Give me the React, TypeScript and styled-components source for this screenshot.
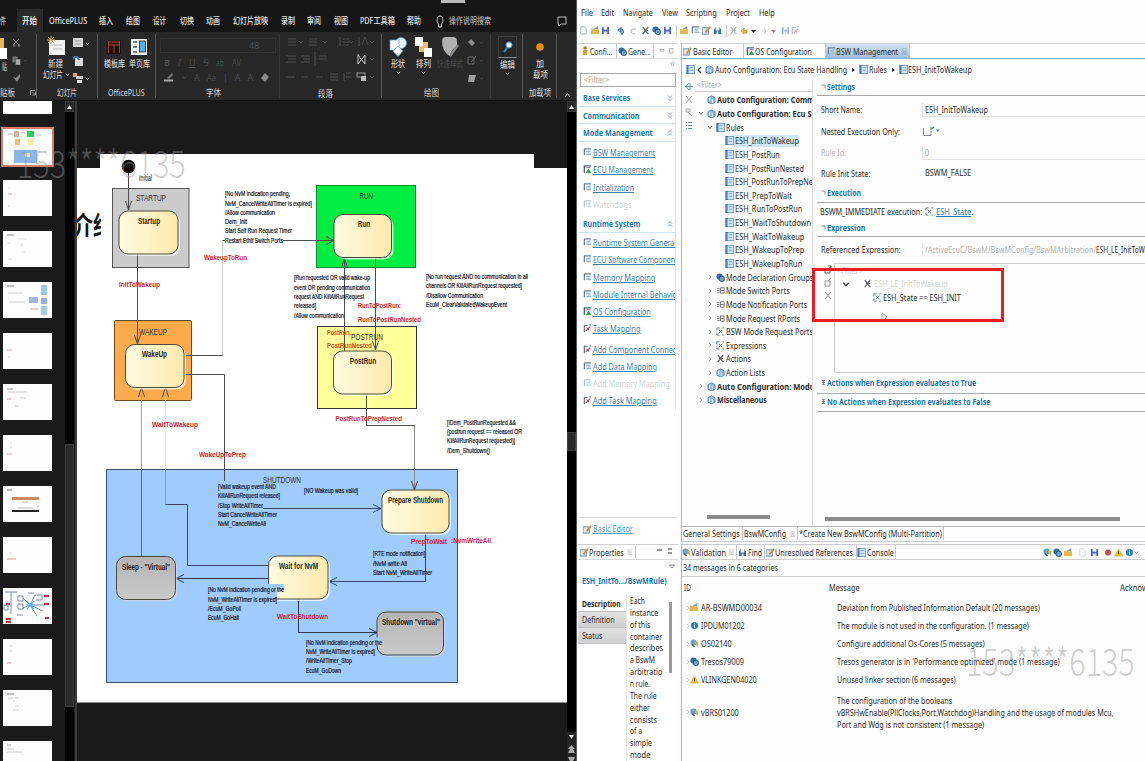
import React, { useLayoutEffect, useRef, useState } from "react";
import styled, { createGlobalStyle, css } from "styled-components";

const Global = createGlobalStyle`
  * { box-sizing: border-box; }
  html, body { margin: 0; padding: 0; overflow: hidden; background: #fff; }
  body { font-family: "Noto Sans", "Noto Sans CJK SC", sans-serif; font-size: 9px; line-height: 1; color: #2b2b2b; }
  svg { flex: none; }
`;

/* ---------- text squeezed to a given width ---------- */
const FitOuter = styled.span<{ $w: number; $c?: string; $b?: boolean; $s?: number; $ml?: number; $u?: boolean }>`
  display: block;
  flex: none;
  width: ${(p) => p.$w}px;
  margin-left: ${(p) => p.$ml ?? 0}px;
  color: ${(p) => p.$c ?? "inherit"};
  font-weight: ${(p) => (p.$b ? 700 : "inherit")};
  font-size: ${(p) => (p.$s ? `${p.$s}px` : "inherit")};
  text-decoration: ${(p) => (p.$u ? "underline" : "none")};
  white-space: pre;
`;
const FitInner = styled.span`
  display: inline-block;
  transform-origin: 0 50%;
  text-decoration: inherit;
`;
type FitProps = { w: number; c?: string; b?: boolean; s?: number; ml?: number; u?: boolean; children: string };
function Fit({ w, c, b, s, ml, u, children }: FitProps) {
  const ref = useRef<HTMLSpanElement>(null);
  const [k, setK] = useState(1);
  useLayoutEffect(() => {
    if (ref.current && ref.current.offsetWidth) setK(w / ref.current.offsetWidth);
  }, [w, children]);
  return (
    <FitOuter $w={w} $c={c} $b={b} $s={s} $ml={ml} $u={u}>
      <FitInner ref={ref} style={{ transform: `scaleX(${k})` }}>{children}</FitInner>
    </FitOuter>
  );
}

/* ---------- shell ---------- */
const Screen = styled.div`
  position: relative;
  display: flex;
  width: 1145px;
  height: 761px;
  overflow: hidden;
  background: #fff;
`;
const Slides = styled.section`
  display: flex;
  flex-direction: column;
  flex: none;
  width: 577px;
  background: #1a1a1a;
  color: #e2e2e2;
  border-right: 1px solid #55575c;
`;
const Ide = styled.section`
  display: flex;
  flex-direction: column;
  flex: 1;
  min-width: 0;
  background: #fdfdfd;
`;
const Watermark = styled.div<{ $x: number; $y: number }>`
  position: absolute;
  left: ${(p) => p.$x}px;
  top: ${(p) => p.$y}px;
  font-family: "Noto Sans CJK SC", sans-serif;
  font-weight: 300;
  font-size: 38px;
  line-height: 38px;
  color: rgba(150, 150, 150, 0.45);
`;
const Highlight = styled.div`
  position: absolute;
  left: 812px;
  top: 268px;
  width: 192px;
  height: 54px;
  border: 3px solid #ed1c24;
`;

/* ---------- presentation app ---------- */
const TitleStrip = styled.div`
  display: flex;
  height: 9px;
  flex: none;
  background: #161616;
  padding-left: 441px;
`;
const SignIn = styled.div`
  width: 24px;
  height: 3px;
  background: #b9b9b9;
`;
const RibbonTabs = styled.div`
  display: flex;
  align-items: center;
  height: 23px;
  flex: none;
  background: #161616;
  font-size: 9px;
  font-weight: 500;
`;
const ActiveTab = styled.div`
  display: flex;
  align-items: center;
  height: 23px;
  width: 26px;
  margin-left: 11px;
  padding-left: 5px;
  background: #292929;
`;
const Ribbon = styled.div`
  display: flex;
  height: 68px;
  flex: none;
  background: #282828;
  padding-top: 2px;
`;
const Group = styled.div<{ $w: number; $line?: string }>`
  display: flex;
  flex-direction: column;
  flex: none;
  width: ${(p) => p.$w}px;
  height: 64px;
  border-right: 1px solid ${(p) => p.$line ?? "#5b5b5b"};
`;
const GroupBody = styled.div`
  display: flex;
  height: 54px;
`;
const GroupLabel = styled.div<{ $pl: number }>`
  display: flex;
  align-items: center;
  height: 12px;
  padding-left: ${(p) => p.$pl}px;
  color: #d8d8d8;
`;
const Tool = styled.div<{ $w: number; $ml?: number }>`
  display: flex;
  flex-direction: column;
  align-items: center;
  gap: 2px;
  width: ${(p) => p.$w}px;
  margin-left: ${(p) => p.$ml ?? 0}px;
  padding-top: 2px;
  flex: none;
  svg { display: block; }
`;
const ToolRow = styled.div`
  display: flex;
  align-items: center;
  gap: 2px;
`;
const ToolGrid = styled.div<{ $ml: number }>`
  display: flex;
  flex-direction: column;
  justify-content: space-between;
  margin-left: ${(p) => p.$ml}px;
  padding: 4px 0 3px;
`;
const FontBox = styled.div`
  display: flex;
  align-items: center;
  width: 116px;
  height: 15px;
  padding-left: 88px;
  border: 1px solid #323232;
  color: #4e4e4e;
`;
const FaintRow = styled.div<{ $gap: number }>`
  display: flex;
  align-items: center;
  gap: ${(p) => p.$gap}px;
  height: 12px;
  padding-left: 4px;
  color: #4c4c4c;
  font-size: 9px;
`;
const EditFrame = styled.div`
  width: 19px;
  height: 22px;
  padding: 4px 3px;
  border: 1px solid #3d3d3d;
  border-bottom-color: #8a8a8a;
`;
const Work = styled.div`
  display: flex;
  flex: 1;
  min-height: 0;
  border-top: 1px solid #141414;
`;
const ThumbList = styled.div`
  display: flex;
  flex-direction: column;
  gap: 15px;
  width: 65px;
  flex: none;
  padding-left: 3px;
`;
const Thumb = styled.div<{ $h?: number; $sel?: boolean }>`
  width: 49px;
  height: ${(p) => p.$h ?? 36}px;
  flex: none;
  background: #fdfdfd;
  ${(p) => p.$sel && css`outline: 2px solid #d08070;`}
  svg { display: block; }
`;
const VScroll = styled.div<{ $w: number }>`
  display: flex;
  flex-direction: column;
  justify-content: flex-start;
  width: ${(p) => p.$w}px;
  flex: none;
  background: #000;
`;
const ScrollBtn = styled.div`
  display: flex;
  align-items: center;
  justify-content: center;
  height: 11px;
  flex: none;
  background: #2a2a2a;
  border: 1px solid #3c3c3c;
`;
const ScrollThumb = styled.div<{ $mt: number; $h: number }>`
  height: ${(p) => p.$h}px;
  margin-top: ${(p) => p.$mt}px;
  flex: none;
  background: #2a2a2a;
  border: 1px solid #3e3e3e;
`;
const Splitter = styled.div`
  width: 2px;
  flex: none;
  background: #3c3c3c;
  margin-left: 1px;
`;
const Canvas = styled.div`
  width: 490px;
  flex: none;
  svg { display: block; }
`;

const Chev = ({ c = "#c8c8c8", up = false, s = 5 }: { c?: string; up?: boolean; s?: number }) => (
  <svg width={s} height={s} viewBox="0 0 6 6"><path d={up ? "M1 4.3L3 2L5 4.3" : "M1 2L3 4.3L5 2"} fill="none" stroke={c} strokeWidth="1.1" /></svg>
);

function RibbonBar() {
  return (
    <Ribbon>
      <Group $w={37}>
        <GroupBody>
          <Tool $w={8}>
            <svg width="8" height="24" viewBox="0 0 8 24"><rect y="2" width="4" height="13" fill="#e9b660" /><rect x="0" y="12" width="7" height="11" fill="#fff" /></svg>
            <Fit w={5} c="#ccc">贴</Fit>
          </Tool>
          <ToolGrid $ml={4}>
            <svg width="9" height="9" viewBox="0 0 9 9"><path d="M1 1L7 7M7 1L1 7" stroke="#777" /><circle cx="2" cy="7.5" r="1.2" fill="#777" /><circle cx="7" cy="7.5" r="1.2" fill="#777" /></svg>
            <ToolRow>
              <svg width="9" height="9" viewBox="0 0 9 9"><rect x="0.5" y="0.5" width="5" height="6" fill="#777" /><rect x="3.5" y="3" width="5" height="6" fill="#aaa" stroke="#333" strokeWidth=".5" /></svg>
              <Chev c="#555" />
            </ToolRow>
            <svg width="9" height="9" viewBox="0 0 9 9"><path d="M1 3L4 4L8 0L8 3L5 8Z" fill="#8a8a8a" /></svg>
          </ToolGrid>
        </GroupBody>
        <GroupLabel $pl={0}>
          <Fit w={15}>贴板</Fit>
          <svg width="21" height="7" viewBox="0 0 21 7"><path d="M15.500 6V1.500H20M17.500 3L20 5.500M20.500 3V6H17.500" fill="none" stroke="#aaa" strokeWidth=".9" /></svg>
        </GroupLabel>
      </Group>
      <Group $w={61}>
        <GroupBody>
          <Tool $w={30} $ml={4}>
            <svg width="19" height="21" viewBox="0 0 19 21"><rect x="2" y="4" width="16" height="15" fill="#f1f1f1" /><path d="M4 9H15M6 13H15" stroke="#b5b5b5" /><path d="M4 0V8M0 4H8M1 1L7 7M7 1L1 7" stroke="#d9a441" strokeWidth="1" /></svg>
            <Fit w={15} ml={-1}>新建</Fit>
            <ToolRow><Fit w={20}>幻灯片</Fit><Chev /></ToolRow>
          </Tool>
          <ToolGrid $ml={2}>
            <ToolRow><svg width="10" height="10" viewBox="0 0 10 10"><rect width="10" height="9" fill="#ddd" /><path d="M2 3H8M2 6H8" stroke="#999" /></svg><Chev /></ToolRow>
            <svg width="10" height="10" viewBox="0 0 10 10"><rect x="2" y="2" width="8" height="8" fill="#ddd" /><path d="M0 3Q4 -2 6 4" fill="none" stroke="#2f7cc4" strokeWidth="2" /></svg>
            <ToolRow><svg width="10" height="10" viewBox="0 0 10 10"><rect width="4" height="4" fill="#e8a070" /><rect x="3" y="3" width="7" height="3" fill="#ccc" /><rect x="4" y="7" width="5" height="3" fill="#eee" /></svg><Chev /></ToolRow>
          </ToolGrid>
        </GroupBody>
        <GroupLabel $pl={20}><Fit w={20}>幻灯片</Fit></GroupLabel>
      </Group>
      <Group $w={58}>
        <GroupBody>
          <Tool $w={24} $ml={4}>
            <svg width="14" height="21" viewBox="0 0 14 21"><rect x="0" y="4" width="14" height="14" fill="#1c1210" /><path d="M1.500 5V17M12.500 5V17M1.500 6H12.500M1.500 9H12.500M7 9V17" stroke="#a8482a" fill="none" /></svg>
            <Fit w={21}>模板库</Fit>
          </Tool>
          <Tool $w={26}>
            <svg width="16" height="21" viewBox="0 0 16 21"><rect x="0" y="3" width="16" height="16" fill="#f4f4f4" /><rect x="8.500" y="5" width="6" height="11" fill="#55aee8" stroke="#222" strokeWidth=".8" /><path d="M2 6H6M2 11H6M2 16H6" stroke="#555" strokeWidth="1.500" /></svg>
            <Fit w={21}>单页库</Fit>
          </Tool>
        </GroupBody>
        <GroupLabel $pl={10}><Fit w={37}>OfficePLUS</Fit></GroupLabel>
      </Group>
      <Group $w={124} $line="#373737">
        <GroupBody>
          <ToolGrid $ml={4}>
            <FontBox>48</FontBox>
            <FaintRow $gap={8}><b>B</b><i>I</i><u>U</u><s>S</s><Fit w={8}>ab</Fit><Fit w={9}>AV</Fit></FaintRow>
            <FaintRow $gap={7}>
              <svg width="11" height="9" viewBox="0 0 11 9"><path d="M3 5L8 0L9 2L5 6Z" fill="#777" /><path d="M0 7.500H9" stroke="#aaa" strokeWidth="2" /></svg>
              <Chev c="#555" /><span>A</span><Fit w={9}>Aa</Fit><span>|</span><span>A</span><span>A</span>
              <svg width="9" height="9" viewBox="0 0 9 9"><path d="M1 5L5 0L9 4L5 9Z" fill="#8a8a8a" /></svg>
            </FaintRow>
          </ToolGrid>
        </GroupBody>
        <GroupLabel $pl={50}><Fit w={15}>字体</Fit></GroupLabel>
      </Group>
      <Group $w={102}>
        <GroupBody>
          <svg width="98" height="54" viewBox="280 34 98 54" fill="none" stroke="#505050">
            <path d="M288 39H296M288 42H296M288 45H296M309 39H317M309 42H317M309 45H317M340 37L340 46M343 39H349M343 42H349M343 45H349M359 37V46M362 45L365 37L368 45" />
            <path d="M299 41L301 43L303 41M323 41L325 43L327 41M349 41L351 43L353 41M370 41L372 43L374 41" />
            <path d="M286 56H296M288 59H296M286 62H296M301 56H310M303 59H310M301 62H310M315 52V66M319 56H327M319 59H327" />
            <path d="M286 77H295M301 77H308M316 77H323M330 74H338M330 77H338M330 80H338M344 73V81M346 73H351M346 77H351" />
            <path d="M358 54V64L365 55V64L358 55" stroke="#c8c8c8" />
            <rect x="357" y="73" width="8" height="4" stroke="#999" /><rect x="361" y="76" width="5" height="5" fill="#bbb" stroke="none" />
            <path d="M370 58L372 60L374 58M370 76L372 78L374 76" />
          </svg>
        </GroupBody>
        <GroupLabel $pl={38}><Fit w={15}>段落</Fit></GroupLabel>
      </Group>
      <Group $w={109} $line="#3c3c3c">
        <GroupBody>
          <Tool $w={24} $ml={4}>
            <svg width="18" height="21" viewBox="0 0 18 21"><circle cx="12" cy="7" r="5.500" fill="#eaf4fb" stroke="#5aa0cc" strokeWidth=".7" /><rect x="1" y="4" width="9" height="10" fill="#fff" stroke="#5aa0cc" strokeWidth=".7" /><path d="M9 10L14 15L9 20.500L4 15Z" fill="#fff" stroke="#5aa0cc" strokeWidth=".7" /></svg>
            <Fit w={14}>形状</Fit><Chev />
          </Tool>
          <Tool $w={26}>
            <svg width="17" height="21" viewBox="0 0 17 21"><rect x="4" y="6" width="9" height="10" fill="#e8bd73" /><rect x="0" y="1" width="8" height="9" fill="#fff" /><rect x="9" y="12" width="8" height="9" fill="#fff" /></svg>
            <Fit w={15}>排列</Fit><Chev />
          </Tool>
          <Tool $w={28}>
            <svg width="18" height="21" viewBox="0 0 18 21"><path d="M1 5Q1 1 5 1H12Q16 1 16 5V11Q10 13 9 20Q1 16 1 5Z" fill="#b0b0b0" /><path d="M9 20L17 9" stroke="#8a8a8a" strokeWidth="2.500" /></svg>
            <Fit w={26} c="#4a4a4a">快速样式</Fit>
          </Tool>
          <ToolGrid $ml={3}>
            <ToolRow><svg width="10" height="9" viewBox="0 0 10 9"><path d="M4 1L8 5L5 8L1 4Z" fill="#8d8d8d" /></svg><Chev c="#555" /></ToolRow>
            <ToolRow><svg width="10" height="9" viewBox="0 0 10 9"><path d="M1 1H7V8H1ZM4 6L9 0" fill="none" stroke="#666" /></svg><Chev c="#555" /></ToolRow>
            <ToolRow><svg width="10" height="9" viewBox="0 0 10 9"><path d="M2 1H9L7 8H1Z" fill="#9d9d9d" /></svg><Chev c="#555" /></ToolRow>
          </ToolGrid>
        </GroupBody>
        <GroupLabel $pl={42}><Fit w={15}>绘图</Fit></GroupLabel>
      </Group>
      <Group $w={32}>
        <Tool $w={30} $ml={1}>
          <EditFrame><svg width="11" height="12" viewBox="0 0 11 12"><path d="M5 7L2 11" stroke="#3c8cc4" strokeWidth="2" /><circle cx="7" cy="4" r="3" fill="#eaf6ff" stroke="#4aa0dc" /></svg></EditFrame>
          <Fit w={15}>编辑</Fit><Chev />
        </Tool>
      </Group>
      <Group $w={34}>
        <GroupBody>
          <Tool $w={32} $ml={1}>
            <svg width="12" height="21" viewBox="0 0 12 21"><circle cx="6" cy="11" r="3.800" fill="#f08c0c" /></svg>
            <Fit w={8}>加</Fit><Fit w={15}>载项</Fit>
          </Tool>
        </GroupBody>
        <GroupLabel $pl={6}><Fit w={22}>加载项</Fit></GroupLabel>
      </Group>
      <Tool $w={19}><svg width="8" height="62" viewBox="0 0 8 62"><path d="M2 61L4.500 57.500L7 61" fill="none" stroke="#ccc" /></svg></Tool>
    </Ribbon>
  );
}

type TL = [number, number, number, string];
const guards: TL[] = [
  [225, 194, 65, "[No NvM indication pending,"], [225, 203.5, 87, "NvM_CancelWriteAllTimer is expired]"], [225, 212.5, 50, "/Allow communication"],
  [225, 221.5, 22, "Dem_Init"], [225, 230.5, 67, "Start Self Run Request Timer"], [225, 240.5, 58, "Restart EthIf Switch Ports"],
  [294, 278, 76, "[Run requested OR valid wake-up"], [294, 288, 76, "event OR pending communication"], [294, 297, 70, "request AND KillAllRunRequest"],
  [294, 306, 22, "released]"], [294, 316, 50, "/Allow communication"],
  [426, 276.5, 102, "[No run request AND no communication in all"], [426, 286, 96, "channels OR KillAllRunRequest requested]"],
  [426, 295.5, 57, "/Disallow Communication"], [426, 304.5, 81, "EcuM_ClearValidatedWakeupEvent"],
  [447, 422.5, 69, "[!Dem_PostRunRequested &&"], [447, 431.5, 75, "(postrun request == released OR"], [447, 440.5, 68, "KillAllRunRequest requested)]"], [447, 450.5, 43, "/Dem_Shutdown()"],
  [218, 486.5, 58, "[Valid wakeup event AND"], [218, 496, 62, "KillAllRunRequest released]"], [218, 505.5, 45, "/Stop WriteAllTimer"],
  [218, 515, 59, "Start CancelWriteAllTimer"], [218, 524, 48, "NvM_CancelWriteAll"], [304, 491, 54, "[NO Wakeup was valid]"],
  [373, 554, 52, "[RTE mode notification]"], [373, 563.5, 34, "/NvM write All"], [373, 572.5, 59, "Start NvM_WriteAllTimer"],
  [208, 590, 76, "[No NvM indication pending or the"], [208, 599.5, 69, "NvM_WriteAllTimer is expired]"], [208, 608.5, 33, "/EcuM_GoPoll"], [208, 617.5, 31, "EcuM_GoHalt"],
  [306, 643, 76, "[No NvM indication pending or the"], [306, 652, 69, "NvM_WriteAllTimer is expired]"], [306, 661, 46, "/WriteAllTimer_Stop"], [306, 671, 35, "EcuM_GoDown"],
];
const events: TL[] = [
  [119, 284.5, 41, "InitToWakeup"], [204, 257.5, 43, "WakeupToRun"], [358, 305, 43, "RunToPostRun:"], [358, 319, 63, "RunToPostRunNested"],
  [327, 332, 24, "PostRun,"], [327, 345.5, 45, "PostRunNested"], [335.5, 418.5, 66.5, "PostRunToPrepNested"], [152, 424.5, 46, "WaitToWakeup"],
  [199, 454.5, 47, "WakeUpToPrep"], [411, 541, 36, "PrepToWait"], [451, 540.5, 40, ":NvmWriteAll"], [277, 616, 51, "WaitToShutdown"],
];
const titles: TL[] = [[136, 201, 30, "STARTUP"], [359.5, 199, 13.5, "RUN"], [351, 340, 32, "POSTRUN"], [139, 334.5, 28, "WAKEUP"], [263, 483, 38, "SHUTDOWN"]];
const nodes: [number, number, number, number, string, TL][] = [
  [119, 211, 59, 43, "y", [138, 224, 22, "Startup"]], [334, 214.5, 57.5, 43, "y", [358, 227, 12, "Run"]], [333.5, 351, 58, 43, "y", [350, 364, 26, "PostRun"]],
  [125.5, 344.5, 58.5, 43, "y", [142, 357, 25, "WakeUp"]], [382, 490, 67, 43, "y", [388, 503, 55, "Prepare Shutdown"]], [268.5, 556, 59.5, 43, "y", [279, 569, 39, "Wait for NvM"]],
  [116.5, 556.5, 59, 43, "g", [122, 570, 48, 'Sleep - "Virtual"']], [377, 612, 66.5, 43, "g", [382, 625, 58, 'Shutdown "virtual"']],
];
const arrow = (x: number, y: number, d: "u" | "d" | "l" | "r") =>
  d === "u" ? `M${x - 3} ${y + 10}L${x} ${y}L${x + 3} ${y + 10}` : d === "d" ? `M${x - 3} ${y - 9}L${x} ${y}L${x + 3} ${y - 9}`
    : d === "l" ? `M${x + 8} ${y - 4}L${x} ${y}L${x + 8} ${y + 4}` : `M${x - 8} ${y - 4}L${x} ${y}L${x - 8} ${y + 4}`;

const T = ({ t }: { t: TL }) => <text x={t[0]} y={t[1]} textLength={t[2]} lengthAdjust="spacingAndGlyphs">{t[3]}</text>;

function StateDiagram() {
  return (
    <svg width="490" height="660" viewBox="77 101 490 660" fontFamily="'Liberation Sans', sans-serif">
      <defs>
        <linearGradient id="y" x1="0" x2="1"><stop offset="0" stopColor="#fffbe0" /><stop offset="1" stopColor="#fde9ac" /></linearGradient>
        <linearGradient id="g" x1="0" x2="0" y1="0" y2="1"><stop offset="0" stopColor="#b4b4b4" /><stop offset="1" stopColor="#cacaca" /></linearGradient>
        <clipPath id="cut"><rect x="77" y="168" width="24" height="100" /></clipPath>
      </defs>
      <path d="M77 168H100V154H534V168H567V702.500H77Z" fill="#fff" />
      <g clipPath="url(#cut)"><text x="73" y="235" fontSize="26" fontWeight="700" fill="#151515" fontFamily="'Noto Sans CJK SC', sans-serif" textLength="40" lengthAdjust="spacingAndGlyphs">介绍</text></g>
      <g stroke="#333" strokeWidth="1">
        <rect x="112.500" y="188.500" width="76.500" height="79" fill="#cbcbcb" stroke="#555" />
        <rect x="316.500" y="185.500" width="99" height="82" fill="#00ee44" stroke="#128a30" />
        <rect x="317.500" y="326.500" width="99" height="82" fill="#ffff99" />
        <rect x="114.500" y="320.500" width="77" height="80" rx="1" fill="#ffab4b" stroke="#6b4a22" />
        <rect x="106.500" y="469.500" width="351" height="213" fill="#a0cbff" stroke="#34507a" />
      </g>
      <g fill="none" stroke="#4b4b4b" strokeWidth="1">
        <path d={`M128.500 170V210${arrow(128.5, 210, "d")}`} />
        <path d={`M137.500 254V344${arrow(137.5, 344, "d")}`} />
        <path d="M222.500 240.500V355.500" stroke="#c9c9c2" />
        <path d={`M184 355.500H222.500M222.500 240.500H225M283 240.500H334${arrow(334, 240.5, "r")}`} />
        <path d={`M344.500 351V257${arrow(344.5, 258, "u")}M375.500 257V350${arrow(375.5, 350, "d")}`} />
        <path d="M366.500 394V425.500H414.500" />
        <path d="M414.500 425.500V490" stroke="#8b8b82" />
        <path d={arrow(414.5, 490, "d")} />
        <path d="M184 374.500H224.500V481" />
        <path d="M141.500 387V469" stroke="#a8a898" />
        <path d="M141.500 469V556" stroke="#4d6d96" />
        <path d={arrow(141.5, 387, "u") + arrow(165.5, 387, "u")} />
        <path d="M165.500 397V469" stroke="#e2e2e2" />
        <path d="M165.500 469V504.500" stroke="#7f9fc6" />
        <path d="M165.500 504.500H187.500V565.500H268" stroke="#36496b" />
        <path d={`M263 508.500H381${arrow(381, 508.500, "r")}`} stroke="#36496b" />
        <path d={`M425.500 533V581.500H328${arrow(329, 581.500, "l")}`} stroke="#36496b" />
        <path d={`M298.500 599V632.500H377${arrow(377, 632.500, "r")}`} stroke="#2b3550" />
        <path d={`M268 578.500H177${arrow(176, 578.500, "l")}`} stroke="#2b3550" />
      </g>
      <circle cx="128.500" cy="166.500" r="6.800" fill="#0a0a0a" />
      {nodes.map(([x, y, w, h, f], i) => (
        <g key={i}>
          <rect x={x + 2} y={y + 2} width={w} height={h} rx="9" fill={f === "g" ? "#cfd6e2" : "#fff"} opacity=".7" />
          <rect x={x} y={y} width={w} height={h} rx="9" fill={`url(#${f})`} stroke="#3a3a30" strokeWidth=".9" />
        </g>
      ))}
      <path d="M268 584H284V591H277V598H268ZM376 637H382V645H376Z" fill="#a0cbff" />
      <g fontSize="9.500" fontWeight="700" fill="#1c1c1c">{nodes.map((n, i) => <T key={i} t={n[5]} />)}</g>
      <g fontSize="9.500" fill="#2e2e2e">{titles.map((t, i) => <T key={i} t={t} />)}</g>
      <text x="139" y="181" fontSize="8.500" fill="#222" textLength="13" lengthAdjust="spacingAndGlyphs">Initial</text>
      <g fontSize="7" fill="#101018" stroke="#101018" strokeWidth=".2">{guards.map((t, i) => <T key={i} t={[t[0], t[1] + 2, t[2], t[3]]} />)}</g>
      <g fontSize="7.500" fontWeight="700" fill="#d2232a">{events.map((t, i) => <g key={i} fill={i === 4 || i === 5 ? "#dc4a14" : undefined}><T t={[t[0], t[1] + 2.5, t[2], t[3]]} /></g>)}</g>
    </svg>
  );
}

const Mini = ({ children }: { children?: React.ReactNode }) => <svg width="49" height="36" viewBox="0 0 49 36">{children}</svg>;
const minis: React.ReactNode[] = [
  <Mini key="a"><rect x="11" y="2" width="5" height="6" fill="#ccb8a8" /><rect x="24" y="2" width="7" height="6" fill="#2ccc5a" /><rect x="12" y="10" width="5" height="6" fill="#f2c070" /><rect x="25" y="10" width="5" height="6" fill="#f4ec9a" /><rect x="11" y="21" width="23" height="13" fill="#8ab6ee" /><rect x="22" y="24" width="5" height="4" fill="#e8e0a0" /><path d="M5 5H10M18 4H22M33 6H38" stroke="#bbb" /></Mini>,
  <Mini key="b"><path d="M5 8H8M5 26H7" stroke="#ddd" /><path d="M5 14H9" stroke="#dba0a8" /></Mini>,
  <Mini key="c"><path d="M4 4H11" stroke="#888" /><path d="M4 12H8M15 8H24M18 14H20M18 21H22M5 28H9" stroke="#ddd" /></Mini>,
  <Mini key="d"><path d="M4 4H11" stroke="#888" /><path d="M5 11H20M6 20H22" stroke="#ccc" /><rect x="26" y="15" width="9" height="6" fill="#9cb6dc" /><rect x="38" y="3" width="6" height="10" fill="#9cc8e6" /><rect x="38" y="16" width="6" height="6" fill="#8fb0e8" /><rect x="38" y="24" width="6" height="9" fill="#a0cfe0" /><path d="M27 27H35" stroke="#d8a0a0" /></Mini>,
  <Mini key="e"><path d="M4 17H9" stroke="#e0a0a6" /><path d="M5 24H7" stroke="#ddd" /></Mini>,
  <Mini key="f"><path d="M4 5H10" stroke="#999" /><path d="M5 8H24M17 14H23M12 22H16" stroke="#ccc" /><path d="M4 15H8" stroke="#e0a0a6" /></Mini>,
  <Mini key="g"><path d="M7 8H9M7 12H9" stroke="#ddd" /><path d="M4 19H9" stroke="#e0a0a6" /></Mini>,
  <Mini key="h"><path d="M4 4H9" stroke="#777" /><rect x="9" y="11" width="27" height="3" fill="#c88a62" /><rect x="9" y="24" width="27" height="2" fill="#222" /><path d="M19 16H25M15 22H30M34 20H36" stroke="#bbb" /></Mini>,
  <Mini key="i"><path d="M6 16H9" stroke="#ddd" /><path d="M4 22H13" stroke="#dc9aa0" /></Mini>,
  <Mini key="j"><g fill="none" stroke="#60708c" strokeWidth=".8"><path d="M2 4H14M8 4V26M15 8H20V13H15ZM15 16H20V21H15ZM14 27H20M20 10L27 17L32 7H39V12H33M20 20L27 17L40 23M27 17L34 28M27 17H42M25 5H31M1 17H5V22H1Z" /></g><path d="M24 13L31 21M31 13L24 21M23 17H32" stroke="#62aee8" strokeWidth="1.200" /><path d="M3 16H7M41 8H46M41 16H46M3 31H8M3 34H8M42 30H46" stroke="#c8303c" strokeWidth="2" /></Mini>,
  <Mini key="k"><path d="M7 7H9M7 12H9" stroke="#ddd" /><path d="M4 24H8" stroke="#dc9aa0" /></Mini>,
  <Mini key="l"><path d="M4 4H11" stroke="#888" /><path d="M5 8H16M10 11H12M12 16H16M10 20H16" stroke="#ccc" /></Mini>,
];

function Presentation() {
  return (
    <Slides>
      <TitleStrip><SignIn /></TitleStrip>
      <RibbonTabs>
        <Fit w={6} c="#ccc">件</Fit>
        <ActiveTab><Fit w={15} b>开始</Fit></ActiveTab>
        <Fit w={38} ml={6}>OfficePLUS</Fit>
        <Fit w={14} ml={12}>插入</Fit><Fit w={14} ml={13}>绘图</Fit><Fit w={13} ml={13}>设计</Fit><Fit w={14} ml={14}>切换</Fit><Fit w={14} ml={12}>动画</Fit>
        <Fit w={35} ml={13}>幻灯片放映</Fit><Fit w={14} ml={13}>录制</Fit><Fit w={14} ml={12}>审阅</Fit><Fit w={14} ml={13}>视图</Fit><Fit w={35} ml={12}>PDF工具箱</Fit><Fit w={14} ml={12}>帮助</Fit>
        <Tool $w={10} $ml={14}><svg width="8" height="14" viewBox="0 0 8 14"><path d="M2.500 9C0 6 1 1 4 1S8 6 5.500 9V12H2.500Z" fill="none" stroke="#ccc" /></svg></Tool>
        <Fit w={42} ml={4} c="#aaa">操作说明搜索</Fit>
        <Tool $w={10} $ml={66}><svg width="10" height="11" viewBox="0 0 10 11"><path d="M1 1H9V8H4L2 10V8H1Z" fill="none" stroke="#bbb" /></svg></Tool>
      </RibbonTabs>
      <RibbonBar />
      <Work>
        <ThumbList>
          <Thumb $h={13}><svg width="49" height="13"><path d="M7 1.500H11" stroke="#ddd" /></svg></Thumb>
          {minis.map((m, i) => <Thumb key={i} $sel={i === 0}>{m}</Thumb>)}
          <Thumb><Mini><path d="M4 4H8" stroke="#aaa" /><path d="M4 8H11M4 11H20" stroke="#ccc" /></Mini></Thumb>
        </ThumbList>
        <VScroll $w={9}>
          <ScrollBtn><svg width="5" height="4"><path d="M0 4L2.500 0L5 4Z" fill="#ddd" /></svg></ScrollBtn>
          <ScrollThumb $mt={332} $h={263} />
        </VScroll>
        <Splitter />
        <Canvas><StateDiagram /></Canvas>
        <VScroll $w={9}>
          <ScrollBtn><svg width="5" height="4"><path d="M0 4L2.500 0L5 4Z" fill="#ddd" /></svg></ScrollBtn>
          <ScrollThumb $mt={320} $h={19} />
          <svg width="9" height="310" viewBox="0 0 9 310"><rect y="281" width="9" height="29" fill="#242424" /><path d="M2 284H7L4.500 288Z" fill="#eee" /><path d="M4.500 294L8 298H6L8 302H1L3 298H1ZM1 306H8L6 310H3Z" fill="#aaa" /></svg>
        </VScroll>
      </Work>
    </Slides>
  );
}

/* ---------- configuration tool ---------- */
type GlyphKind = "doc" | "chart" | "green" | "pack" | "ports" | "warn" | "info" | "find" | "gear" | "folder" | "save" | "page" | "flag" | "tools" | "cond" | "red" | "pen";
const glyphs: Record<GlyphKind, React.ReactNode> = {
  doc: <><rect x=".5" y=".5" width="9" height="9" fill="#d3e6f5" stroke="#6f9cc8" /><path d="M2 0V10" stroke="#3c6da6" strokeWidth="1.500" /><path d="M4 3H8M4 6H8" stroke="#6f9fcc" /></>,
  chart: <><path d="M1 1H9M1.500 1V8M4 4H8M4 7H9" fill="none" stroke="#6b7f98" strokeWidth="1.400" /><rect x="4" y="2" width="5" height="6" fill="#b9d3ea" opacity=".6" /></>,
  green: <><path d="M1.500 9V1H9" fill="none" stroke="#4f6680" strokeWidth="1.500" /><path d="M3 9L6 4L9.500 9Z" fill="#38a048" /><path d="M4 3H8" stroke="#a05060" /></>,
  pack: <><path d="M1 3L5 1L9 3V8L5 10L1 8Z" fill="#8fbbe2" stroke="#3c6b9e" strokeWidth=".8" /><path d="M3 3V7M6 5V9" stroke="#fff" /></>,
  ports: <path d="M1 3H4M1 5H4M1 7H4M5 2H9V8H5ZM5 5H9" fill="none" stroke="#66707c" />,
  warn: <><path d="M5 1L9.500 9H.5Z" fill="#f4c430" stroke="#c89a10" strokeWidth=".6" /><path d="M5 3.500V7" stroke="#503c00" /></>,
  info: <><circle cx="5" cy="5" r="4" fill="#2b7fb8" /><path d="M5 4V8M5 2V3" stroke="#fff" /></>,
  find: <path d="M1 9V4L3 1V5H7V1L9 4V9H6V6H4V9Z" fill="#3b6ba5" />,
  gear: <><circle cx="4" cy="4" r="3.500" fill="#2f6ea6" /><circle cx="6.500" cy="6.500" r="3" fill="#6aa4cf" stroke="#234e7c" /></>,
  folder: <><path d="M0 9V3H4L5 4H9V9Z" fill="#e4b850" /><path d="M3 3L8 0V4" fill="#8a9cb0" /></>,
  save: <><rect x="1" y="1" width="8" height="8" fill="#4a6ab8" /><rect x="3" y="1" width="4" height="3" fill="#fff" /><rect x="3" y="6" width="4" height="3" fill="#dde" /></>,
  page: <path d="M2 1H6L8 3V9H2Z" fill="#fff" stroke="#9aa" />,
  flag: <><circle cx="4" cy="4" r="3.500" fill="#6aa0cc" /><path d="M5 3H9V9L7 7Z" fill="#e0b030" /><path d="M2 6L5 9" stroke="#2c5d88" strokeWidth="1.500" /></>,
  tools: <path d="M2 1L8 9M8 1L2 9M3 5H8" stroke="#5d646c" strokeWidth="1.300" />,
  cond: <path d="M1 1H4M1 9H4M9 1H7M9 9H7M3 3L7 7M7 3L3 7M1 1V4M1 6V9" fill="none" stroke="#5a7288" />,
  red: <><path d="M1.500 9V1.500H5M7 1H9" fill="none" stroke="#66788c" strokeWidth="1.400" /><path d="M3 8L8 3M4 4L7 7" stroke="#b83a4c" strokeWidth="1.300" /></>,
  pen: <><rect x="0" y="2" width="7" height="7" fill="#dbe8f4" stroke="#5d82ac" /><path d="M4 7L9 1" stroke="#d88a30" strokeWidth="2" /></>,
};
const GlyphBox = styled.span<{ $ml: number; $dim: boolean }>`
  display: block;
  flex: none;
  width: 9px;
  height: 9px;
  margin-left: ${(p) => p.$ml}px;
  opacity: ${(p) => (p.$dim ? 0.45 : 1)};
  svg { display: block; }
`;
const Glyph = ({ k, ml = 0, dim = false }: { k: GlyphKind; ml?: number; dim?: boolean }) => (
  <GlyphBox $ml={ml} $dim={dim}><svg width="9" height="9" viewBox="0 0 10 10">{glyphs[k]}</svg></GlyphBox>
);

const Row = styled.div<{ $h: number; $pl?: number; $bt?: string; $bb?: string; $lift?: number }>`
  display: flex;
  align-items: center;
  flex: none;
  height: ${(p) => p.$h}px;
  padding-left: ${(p) => p.$pl ?? 0}px;
  padding-bottom: ${(p) => p.$lift ?? 0}px;
  border-top: ${(p) => (p.$bt ? `1px solid ${p.$bt}` : "0")};
  border-bottom: ${(p) => (p.$bb ? `1px solid ${p.$bb}` : "0")};
`;
const Columns = styled.div<{ $h?: number }>`
  display: flex;
  min-height: 0;
  flex: ${(p) => (p.$h ? "none" : 1)};
  height: ${(p) => (p.$h ? `${p.$h}px` : "auto")};
`;
const SideStack = styled.div`
  display: flex;
  flex-direction: column;
  width: 101px;
  flex: none;
  padding-left: 1px;
  background: #fff;
`;
const Main = styled.div`
  display: flex;
  flex-direction: column;
  width: 464px;
  flex: none;
  margin-left: 3px;
  border-left: 1px solid #aab4c0;
`;
const Tab = styled.div<{ $w: number; $active?: boolean; $pl?: number }>`
  display: flex;
  align-items: center;
  width: ${(p) => p.$w}px;
  height: 100%;
  flex: none;
  padding-left: ${(p) => p.$pl ?? 2}px;
  border-right: 1px solid #c4c8cc;
  background: ${(p) => (p.$active ? "linear-gradient(#d3e2f2, #9fc0e2)" : "transparent")};
`;
const SearchBox = styled.div`
  display: flex;
  align-items: center;
  width: 96px;
  height: 14px;
  flex: none;
  margin: 4px 0 2px 2px;
  padding-left: 3px;
  border: 1px solid #a5a5a5;
`;
const SideClip = styled.div<{ $h: number }>`
  display: flex;
  flex-direction: column;
  flex: none;
  width: 98px;
  height: ${(p) => p.$h}px;
  overflow: hidden;
  border-right: 1px solid #dfe3e6;
`;
const Gap = styled.div<{ $h: number }>`
  height: ${(p) => p.$h}px;
  flex: none;
`;
const IconRail = styled.div`
  display: flex;
  flex-direction: column;
  align-items: center;
  gap: 4px;
  width: 13px;
  padding-top: 2px;
  flex: none;
`;
const TreePane = styled.div`
  display: flex;
  flex-direction: column;
  width: 118px;
  flex: none;
  overflow: hidden;
  border-right: 1px solid #dcdcdc;
`;
const Selected = styled.div<{ $on: boolean }>`
  display: flex;
  flex: none;
  align-items: center;
  height: 12px;
  background: ${(p) => (p.$on ? "#cfe8f8" : "transparent")};
`;
const HBar = styled.div<{ $ml: number; $w: number; $mt: number }>`
  width: ${(p) => p.$w}px;
  height: 4px;
  flex: none;
  margin: ${(p) => p.$mt}px 0 0 ${(p) => p.$ml}px;
  background: #8b8b8b;
`;
const Form = styled.div`
  display: flex;
  flex-direction: column;
  flex: 1;
  min-width: 0;
  overflow: hidden;
  padding-left: 4px;
`;
const LabelCell = styled.div`
  width: 105px;
  flex: none;
  padding-left: 4px;
`;
const Field = styled.div<{ $line?: boolean; $bare?: boolean }>`
  display: flex;
  align-items: center;
  width: 230px;
  flex: none;
  height: 14px;
  padding-left: ${(p) => (p.$bare ? 0 : 2)}px;
  border-left: 1px solid ${(p) => (p.$bare ? "transparent" : "#e4e4e4")};
  border-bottom: 1px solid ${(p) => (p.$line ? "#e2e2e2" : "transparent")};
`;
const TreeBox = styled.div`
  display: flex;
  flex-direction: column;
  flex: 1;
  height: 110px;
  border: 1px solid #cfcfcf;
  border-right: 0;
`;
const ToolCol = styled.div`
  display: flex;
  flex-direction: column;
  align-items: center;
  gap: 4px;
  width: 17px;
  padding: 2px 0 0 4px;
  flex: none;
`;
const PropTabs = styled.div`
  width: 49px;
  flex: none;
  border-right: 1px solid #e3e3e3;
`;
const PropTab = styled.div<{ $on?: boolean }>`
  display: flex;
  align-items: center;
  height: ${(p) => (p.$on ? 17 : 16)}px;
  padding-left: 4px;
  background: ${(p) => (p.$on ? "#fff" : "linear-gradient(#e2e2e2, #cfcfcf)")};
  border-bottom: 1px solid #c2c2c2;
`;
const PropText = styled.div`
  display: flex;
  flex-direction: column;
  width: 38px;
  padding-left: 3px;
  flex: none;
`;
const Thin = styled.div`
  width: 3px;
  height: 71px;
  margin: 7px 0 0 4px;
  background: #9a9a9a;
`;
const MessageText = styled.div`
  display: flex;
  flex-direction: column;
  gap: 3px;
`;

const BLUE = "#1a78b4";
const LINK = "#3a83b0";

type Side = [string, number, GlyphKind, number, boolean?];
const sideTop: Side[] = [["BSW Management", 62, "chart", 17.5], ["ECU Management", 60, "green", 17.5], ["Initialization", 41, "chart", 17], ["Watchdogs", 38, "chart", 17, true]];
const sideMid: Side[] = [["Runtime System General", 83, "chart", 17.5], ["ECU Software Components", 88, "chart", 17.5], ["Memory Mapping", 62, "chart", 17], ["Module Internal Behavior", 87, "chart", 17], ["OS Configuration", 58, "green", 17.5], ["Task Mapping", 48, "red", 17.5]];
const sideEnd: Side[] = [["Add Component Connection", 97, "red", 17.5], ["Add Data Mapping", 64, "chart", 17], ["Add Memory Mapping", 77, "chart", 17, true], ["Add Task Mapping", 64, "red", 17.5]];
const SideRows = ({ rows }: { rows: Side[] }) => (
  <>{rows.map(([t, w, k, h, dim]) => (
    <Row key={t} $h={h} $pl={5} $lift={1}><Glyph k={k} dim={dim} /><Fit w={w} ml={1} c={dim ? "#d0d4d8" : LINK} u={!dim}>{t}</Fit></Row>
  ))}</>
);
const SideHead = ({ t, w, h, up }: { t: string; w: number; h: number; up?: boolean }) => (
  <Row $h={h} $pl={5} $bb="#cfe4f2">
    <Fit w={w} b c={BLUE}>{t}</Fit>
    <Row as="span" $h={8} $pl={84 - w}>
      <svg width="6" height="8" viewBox="0 0 6 8"><path d={up ? "M1 3.500L3 1.500L5 3.500M1 6.500L3 4.500L5 6.500" : "M1 1.500L3 3.500L5 1.500M1 4.500L3 6.500L5 4.500"} fill="none" stroke="#5b8fb5" strokeWidth=".9" /></svg>
    </Row>
  </Row>
);

function LeftTop() {
  return (
    <SideStack>
      <Row $h={16} $pl={2} $bt="#d4d4d4" $bb="#e0e0e0">
        <Tab $w={37} $pl={1}><svg width="8" height="10" viewBox="0 0 8 10"><circle cx="4" cy="2" r="1.800" fill="#c87020" /><rect x="2" y="4" width="4" height="5" fill="#e0a020" /></svg><Fit w={22} ml={1}>Confi...</Fit></Tab>
        <Tab $w={37} $pl={1}><Glyph k="gear" /><Fit w={23} ml={1}>Gene...</Fit></Tab>
        <svg width="20" height="10" viewBox="0 0 20 10"><path d="M6 3.500H10V5H6ZM15.500 2.500H19V7H15.500Z" fill="none" stroke="#aaa" strokeWidth=".8" /></svg>
      </Row>
      <Row $h={10} $pl={92}><svg width="5" height="5"><path d="M.5 1H4.500L2.500 4Z" fill="none" stroke="#aaa" strokeWidth=".8" /></svg></Row>
      <SearchBox><Fit w={25} c="#aaa" s={8}>{"<Filter>"}</Fit></SearchBox>
      <SideClip $h={321}>
        <SideHead t="Base Services" w={47} h={18} />
        <SideHead t="Communication" w={56} h={17} />
        <SideHead t="Mode Management" w={70} h={18} up />
        <Gap $h={2} />
        <SideRows rows={sideTop} />
        <Gap $h={2} />
        <SideHead t="Runtime System" w={57} h={18} up />
        <Gap $h={1} />
        <SideRows rows={sideMid} />
        <Gap $h={3} />
        <SideRows rows={sideEnd} />
      </SideClip>
      <Gap $h={107} />
      <Row $h={23} $pl={5} $bt="#d8dde2"><Glyph k="pen" /><Fit w={40} ml={1} c="#4a97c0" u s={8.5}>Basic Editor</Fit></Row>
    </SideStack>
  );
}

type Node = [number, string, number, GlyphKind, string?, boolean?];
const tree: Node[] = [
  [10, "Auto Configuration: Communication", 132, "pack", "", true], [10, "Auto Configuration: Ecu State Handling", 146, "pack", "v", true], [19, "Rules", 18, "doc", "v"],
  [28, "ESH_InitToWakeup", 64, "doc"], [28, "ESH_PostRun", 45, "doc"], [28, "ESH_PostRunNested", 69, "doc"], [28, "ESH_PostRunToPrepNested", 92, "doc"], [28, "ESH_PrepToWait", 57, "doc"],
  [28, "ESH_RunToPostRun", 67, "doc"], [28, "ESH_WaitToShutdown", 76, "doc"], [28, "ESH_WaitToWakeup", 69, "doc"], [28, "ESH_WakeupToPrep", 69, "doc"], [28, "ESH_WakeupToRun", 67, "doc"],
  [19, "Mode Declaration Groups", 87, "gear", ">"], [19, "Mode Switch Ports", 64, "ports", ">"], [19, "Mode Notification Ports", 81, "ports", ">"], [19, "Mode Request RPorts", 74, "ports", ">"],
  [19, "BSW Mode Request Ports", 87, "cond", ">"], [19, "Expressions", 40, "cond", ">"], [19, "Actions", 25, "tools", ">"], [19, "Action Lists", 39, "pack", ">"],
  [10, "Auto Configuration: Module Initialization", 154, "pack", ">", true], [10, "Miscellaneous", 50, "pack", ">", true],
];

function Tree() {
  return (
    <TreePane>
      <Row $h={12} $bb="#c8c8c8" $pl={2}><Fit w={25} c="#b0b0b0" s={8.5}>{"<Filter>"}</Fit></Row>
      <Gap $h={1} />
      {tree.map(([x, t, w, k, a, b]) => (
        <Row key={t} $h={13.65} $pl={x - 7.5}>
          <svg width="8" height="6" viewBox="0 0 8 6">{a && <path d={a === "v" ? "M1 2L3 4.500L5 2" : "M2 1L4 3L2 5"} fill="none" stroke={a === "v" ? "#555" : "#aaa"} />}</svg>
          <Glyph k={k} ml={1} />
          <Selected $on={t === "ESH_InitToWakeup"}><Fit w={w} b={b} ml={1.5}>{t}</Fit></Selected>
        </Row>
      ))}
      <HBar $ml={12} $w={63} $mt={108} />
    </TreePane>
  );
}

const Section = ({ t, w, h, closed }: { t: string; w: number; h: number; closed?: boolean }) => (
  <Row $h={h} $pl={4} $bb="#a9a9a9" $lift={2}>
    <svg width="5" height="5" viewBox="0 0 5 5"><path d={closed ? "M1 .5H4M1 2.500H4M1 4.500H4M2.500 0V5" : "M.5 1H4V4.500"} stroke="#777" fill="none" strokeWidth=".8" /></svg>
    <Fit w={w} b c={BLUE} ml={1}>{t}</Fit>
  </Row>
);

function Editor() {
  return (
    <Form>
      <Section t="Settings" w={28} h={16} />
      <Gap $h={5} />
      <Row $h={18} $lift={1}><LabelCell><Fit w={41}>Short Name:</Fit></LabelCell><Field $line><Fit w={63}>ESH_InitToWakeup</Fit></Field></Row>
      <Row $h={24}><LabelCell><Fit w={79}>Nested Execution Only:</Fit></LabelCell>
        <Field $bare><svg width="20" height="12" viewBox="0 0 20 12"><path d="M.5 3V10.500H8V6M8 2V5" fill="none" stroke="#888" /><path d="M8 4L11 2" stroke="#3a8a4a" strokeWidth="1.500" /><path d="M13 4.500H16.500L14.800 7Z" fill="#3a7ab0" /></svg></Field></Row>
      <Row $h={20} $lift={1}><LabelCell><Fit w={25} c="#b8b8b8">Rule Id:</Fit></LabelCell><Field $line><Fit w={4} c="#aaa">0</Fit></Field></Row>
      <Row $h={21} $lift={1}><LabelCell><Fit w={49}>Rule Init State:</Fit></LabelCell><Field $bare><Fit w={46} ml={2}>BSWM_FALSE</Fit></Field></Row>
      <Gap $h={1} />
      <Section t="Execution" w={34} h={18} />
      <Row $h={17} $pl={3} $lift={1}><Fit w={102}>BSWM_IMMEDIATE execution:</Fit><Glyph k="cond" ml={3} /><Fit w={35} ml={2} c={BLUE} u>ESH_State</Fit><span>.</span></Row>
      <Section t="Expression" w={38} h={17} />
      <Gap $h={4} />
      <Row $h={18} $lift={1}><LabelCell><Fit w={80}>Referenced Expression:</Fit></LabelCell><Field><Fit w={171} c="#b4b4b4">/ActiveEcuC/BswM/BswMConfig/BswMArbitration/</Fit><Fit w={68}>ESH_LE_InitToWakeup</Fit></Field></Row>
      <Gap $h={4} />
      <Columns $h={110}>
        <ToolCol>
          <svg width="8" height="9" viewBox="0 0 8 9"><path d="M1 3V8H6V5M2 4Q4 6 7 1M4 1H7V4" fill="none" stroke="#555" /></svg>
          <svg width="8" height="9" viewBox="0 0 8 9"><path d="M1 3H6V8H1ZM4 3L7 0" fill="none" stroke="#999" /></svg>
          <svg width="8" height="9" viewBox="0 0 8 9"><path d="M1 1L7 8M7 1L1 8" stroke="#999" strokeWidth="1.100" /></svg>
        </ToolCol>
        <TreeBox>
          <Row $h={13} $pl={2}><Fit w={26} c="#cfcfcf" s={8}>{"<Filter>"}</Fit></Row>
          <Row $h={13} $pl={7}><Chev c="#444" s={8} /><Glyph k="tools" ml={13} /><Fit w={74} c="#d4d4d4" ml={2}>ESH_LE_InitToWakeup</Fit></Row>
          <Row $h={14} $pl={38}><Glyph k="cond" /><Fit w={78} ml={1}>ESH_State == ESH_INIT</Fit></Row>
          <Row $h={26} $pl={46}><svg width="8" height="12" viewBox="0 0 8 12"><path d="M1 2V9L3 8L5 11L6 10L4 7L6 6Z" fill="#fff" stroke="#888" strokeWidth=".8" /></svg></Row>
        </TreeBox>
      </Columns>
      <Section t="Actions when Expression evaluates to True" w={149} h={21} closed />
      <Section t="No Actions when Expression evaluates to False" w={163} h={18} closed />
      <HBar $ml={8} $w={295} $mt={105} />
    </Form>
  );
}

function MainTop() {
  return (
    <Main>
      <Row $h={16} $bt="#cfd3d8" $bb="#8fb0d4">
        <Tab $w={62} $pl={1}><Glyph k="pen" /><Fit w={39} ml={1}>Basic Editor</Fit></Tab>
        <Tab $w={82}><Glyph k="green" /><Fit w={57} ml={0}>OS Configuration</Fit></Tab>
        <Tab $w={84} $active $pl={1}><Glyph k="chart" /><Fit w={62} ml={0}>BSW Management</Fit><Fit w={6} ml={3} c="#8aa">☒</Fit></Tab>
      </Row>
      <Row $h={21} $pl={4}>
        <Glyph k="doc" /><svg width="8" height="8" viewBox="0 0 8 8"><path d="M6 1L3 4L6 7" fill="none" stroke="#222" strokeWidth="1.200" /></svg>
        <Glyph k="pack" ml={2} /><Fit w={132} ml={1}>Auto Configuration: Ecu State Handling</Fit>
        <svg width="12" height="6" viewBox="0 0 12 6"><path d="M5 1L8 3L5 5Z" fill="#222" /></svg>
        <Glyph k="doc" /><Fit w={18} ml={1}>Rules</Fit>
        <svg width="12" height="6" viewBox="0 0 12 6"><path d="M5 1L8 3L5 5Z" fill="#222" /></svg>
        <Glyph k="doc" /><Fit w={64} ml={0}>ESH_InitToWakeup</Fit>
      </Row>
      <Columns $h={446}>
        <IconRail>
          <svg width="8" height="9" viewBox="0 0 8 9"><path d="M0 4.500H8M4 1L1 4.500L4 8M5 1V8" stroke="#6d93b8" fill="none" /></svg>
          <svg width="8" height="9" viewBox="0 0 8 9"><path d="M1 1L7 8M7 1L1 8" stroke="#aaa" /></svg>
          <svg width="8" height="9" viewBox="0 0 8 9"><path d="M1 1H5V4H1ZM3 4L7 8M3 6H6" stroke="#aaa" fill="none" /></svg>
          <svg width="8" height="9" viewBox="0 0 8 9"><path d="M1 1.500H2M3 1.500H7M1 4.500H2M3 4.500H7M1 7.500H2M3 7.500H7" stroke="#5d86b4" /></svg>
        </IconRail>
        <Tree />
        <Editor />
      </Columns>
      <Row $h={16} $bt="#b8b8b8" $bb="#c8ccd0" $lift={1}>
        <Tab $w={61} $pl={1}><Fit w={57}>General Settings</Fit></Tab>
        <Tab $w={55} $pl={1}><Fit w={42}>BswMConfig</Fit><Fit w={5} ml={4} c="#aaa" s={8}>☒</Fit></Tab>
        <Tab $w={146} $pl={1}><Fit w={143}>*Create New BswMConfig (Multi-Partition)</Fit></Tab>
      </Row>
    </Main>
  );
}

const desc: [string, number][] = [["Each", 15], ["instance", 28], ["of this", 20], ["container", 32], ["describes", 33], ["a BswM", 25], ["arbitratio", 32], ["n rule.", 20], ["The rule", 27], ["either", 20], ["consists", 27], ["of a", 12], ["simple", 22], ["mode", 20]];

function LeftBottom() {
  return (
    <SideStack>
      <Row $h={16} $pl={2} $bt="#cfcfcf" $bb="#d8d8d8">
        <Tab $w={56} $pl={0}><Glyph k="pen" /><Fit w={35} ml={0}>Properties</Fit><Fit w={5} ml={3} c="#aaa" s={8}>☒</Fit></Tab>
        <svg width="40" height="10" viewBox="0 0 40 10"><path d="M21 3H26M32 2H36M32 6H36" stroke="#777" strokeWidth="1.300" /></svg>
      </Row>
      <Row $h={13} $pl={91}><svg width="6" height="5"><path d="M.5 1H5.500L3 4Z" fill="none" stroke="#777" strokeWidth=".8" /></svg></Row>
      <Gap $h={1} />
      <Row $h={15} $pl={4}><Fit w={85} b c={BLUE} s={8.5}>ESH_InitTo.../BswMRule)</Fit></Row>
      <Gap $h={6} />
      <Columns>
        <PropTabs>
          <PropTab $on><Fit w={39} b>Description</Fit></PropTab>
          <PropTab><Fit w={33}>Definition</Fit></PropTab>
          <PropTab><Fit w={20}>Status</Fit></PropTab>
        </PropTabs>
        <PropText>{desc.map(([t, w]) => <Row key={t} $h={11.87} $lift={1}><Fit w={w}>{t}</Fit></Row>)}</PropText>
        <Thin />
      </Columns>
    </SideStack>
  );
}

const msgs: [GlyphKind, string, number, [string, number][], number][] = [
  ["folder", "AR-BSWMD00034", 61, [["Deviation from Published Information Default (20 messages)", 203]], 18],
  ["info", "IPDUM01202", 44, [["The module is not used in the configuration. (1 message)", 192]], 18],
  ["flag", "OS02140", 31, [["Configure additional Os-Cores (5 messages)", 148]], 18],
  ["gear", "Tresos79009", 43, [["Tresos generator is in 'Performance optimized' mode (1 message)", 223]], 18],
  ["warn", "VLINKGEN04020", 56, [["Unused linker section (6 messages)", 119]], 18],
  ["flag", "vBRS01200", 38, [["The configuration of the booleans", 115], ["vBRSHwEnable(PllClocks,Port,Watchdog)Handling and the usage of modules Mcu,", 277], ["Port and Wdg is not consistent (1 message)", 147]], 47],
];

function MainBottom() {
  return (
    <Main>
      <Row $h={16} $bt="#c8ccd0" $bb="#cfcfcf">
        <Tab $w={55} $pl={0}><Glyph k="flag" /><Fit w={35}>Validation</Fit><Fit w={5} ml={3} c="#aaa" s={8}>☒</Fit></Tab>
        <Tab $w={28} $pl={1}><Glyph k="find" /><Fit w={14} ml={1}>Find</Fit></Tab>
        <Tab $w={92} $pl={1}><Glyph k="pen" /><Fit w={78} ml={0}>Unresolved References</Fit></Tab>
        <Tab $w={39} $pl={0}><Glyph k="doc" /><Fit w={27} ml={1}>Console</Fit></Tab>
        <Glyph k="flag" ml={147} /><Glyph k="gear" ml={1} /><Glyph k="folder" ml={2} /><Glyph k="page" ml={5} dim /><Glyph k="save" ml={3} />
        <svg width="12" height="9" viewBox="0 0 12 9"><circle cx="9" cy="4.500" r="3" fill="#c0504a" /></svg>
        <Glyph k="warn" ml={3} /><Glyph k="info" ml={2} /><Chev c="#888" />
      </Row>
      <Row $h={17} $pl={1} $bb="#d0d0d0" $lift={1}><Fit w={95}>34 messages in 6 categories</Fit></Row>
      <Row $h={22} $pl={2} $lift={1}><Fit w={7}>ID</Fit><Fit w={31} ml={138}>Message</Fit><Fit w={48} ml={260}>Acknowledge</Fit></Row>
      {msgs.map(([k, id, w, lines, h]) => (
        <Row key={id} $h={h} $pl={4} $lift={1}>
          <svg width="4" height="6" viewBox="0 0 4 6"><path d="M1 1L3 3L1 5" fill="none" stroke="#bbb" strokeWidth=".8" /></svg>
          <Glyph k={k} /><Fit w={w} ml={2}>{id}</Fit>
          <MessageText>{lines.map(([t, lw]) => <Fit key={t} w={lw} ml={136 - w}>{t}</Fit>)}</MessageText>
        </Row>
      ))}
    </Main>
  );
}

const Menus: [string, number, number][] = [["File", 12, 4], ["Edit", 13, 8], ["Navigate", 30, 9], ["View", 16, 9], ["Scripting", 31, 8], ["Project", 24, 9], ["Help", 16, 9]];
const toolIcons: [GlyphKind, number, boolean?][] = [["page", 2], ["folder", 3], ["save", 1]];

function ConfigTool() {
  return (
    <Ide>
      <Gap $h={4} />
      <Row $h={17}>{Menus.map(([t, w, ml]) => <Fit key={t} w={w} ml={ml} s={9.5}>{t}</Fit>)}</Row>
      <Row $h={19}>
        {toolIcons.map(([k, ml, d]) => <Glyph key={k} k={k} ml={ml} dim={d} />)}
        <svg width="30" height="10" viewBox="0 0 30 10"><path d="M11 8Q15 7 12 3M8 4L11 2V6Z" fill="none" stroke="#3a74b0" strokeWidth="1.300" /><path d="M25 8Q19 7 22 3H26" fill="none" stroke="#bbb" /></svg>
        <Glyph k="tools" ml={1} /><Glyph k="gear" ml={2} /><Glyph k="save" ml={2} />
        <svg width="5" height="12"><path d="M4.500 0V12" stroke="#ccc" /></svg>
        <Glyph k="folder" ml={3} /><Glyph k="chart" ml={2} /><Glyph k="pen" ml={2} /><Glyph k="find" ml={2} />
        <svg width="6" height="12"><path d="M4.500 0V12" stroke="#ccc" /></svg>
        <Glyph k="tools" ml={1} dim />
        <svg width="42" height="10" viewBox="0 0 42 10"><path d="M3 5L6 2V4H9V7H6V8Z" fill="#e0b860" stroke="#b08830" strokeWidth=".6" /><path d="M13 4H18L15.500 7Z" fill="#222" /><path d="M24 5H28L26 2M28 5L26 8" stroke="#ccc" fill="none" /><path d="M33 4H38L35.500 7Z" fill="#888" /></svg>
        <Glyph k="save" ml={1} dim /><Glyph k="red" ml={1} dim />
      </Row>
      <Gap $h={3} />
      <Columns $h={499}><LeftTop /><MainTop /></Columns>
      <Gap $h={2} />
      <Columns><LeftBottom /><MainBottom /></Columns>
    </Ide>
  );
}

export default function App() {
  return (
    <Screen>
      <Global />
      <Presentation />
      <ConfigTool />
      <Highlight />
      <Watermark $x={17} $y={143}><Fit w={169}>153****6135</Fit></Watermark>
      <Watermark $x={966} $y={641}><Fit w={169}>153****6135</Fit></Watermark>
    </Screen>
  );
}
